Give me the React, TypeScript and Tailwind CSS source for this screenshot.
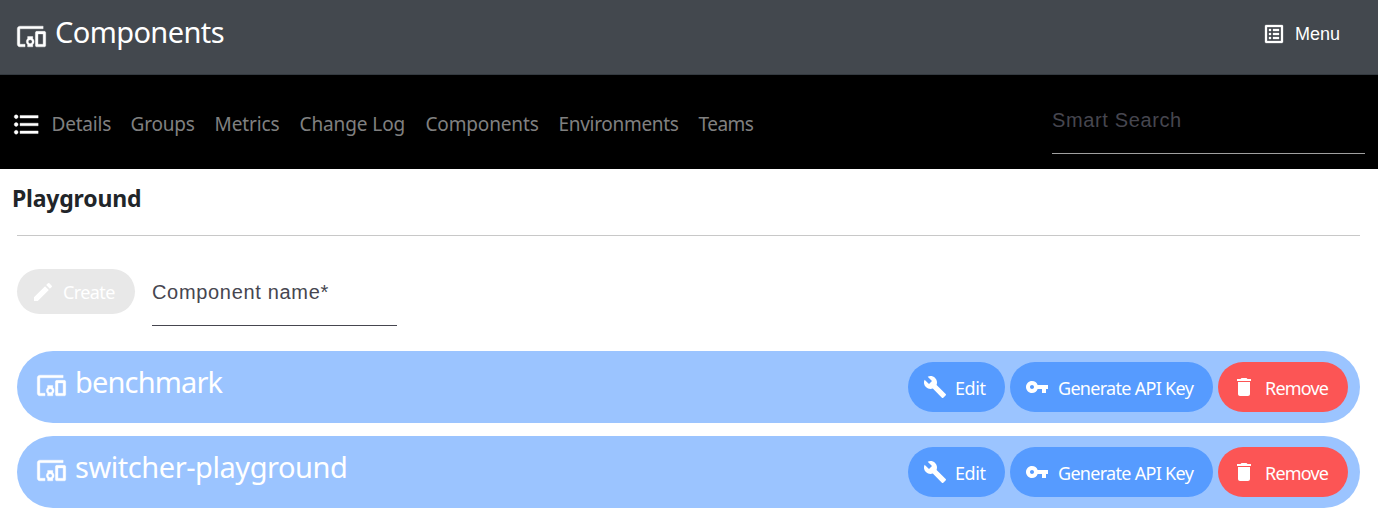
import React from "react";
import {
  MdBuild,
  MdDelete,
  MdDevicesOther,
  MdEdit,
  MdFormatListBulleted,
  MdListAlt,
  MdVpnKey,
} from "react-icons/md";

const navItems = [
  { label: "Details", width: "w-[79px]", tracking: "tracking-[-0.2px]" },
  { label: "Groups", width: "w-[84px]", tracking: "tracking-[-0.2px]" },
  { label: "Metrics", width: "w-[85px]", tracking: "tracking-[-0.1px]" },
  { label: "Change Log", width: "w-[126px]", tracking: "tracking-[-0.1px]" },
  { label: "Components", width: "w-[133px]", tracking: "tracking-[-0.15px]" },
  { label: "Environments", width: "w-[140px]", tracking: "tracking-[-0.3px]" },
  { label: "Teams", width: "w-[60px]", tracking: "tracking-[-0.5px]" },
];

function ComponentRow({ name, tracking }: { name: string; tracking: string }) {
  return (
    <li className="flex h-[72px] items-start rounded-full bg-[#9bc4ff] pl-[19px] pr-3 pt-[11px] text-white">
      <MdDevicesOther className="mt-[7.5px] size-[31px] shrink-0 stroke-[0.3] [&_path[fill=none]]:stroke-none" />
      <h3 className={`-mt-px ml-2 flex-1 text-[29px] leading-[42px] ${tracking}`}>{name}</h3>
      <div className="flex gap-[5px] text-[18px]">
        <button className="flex h-[50px] w-[97px] items-center whitespace-nowrap rounded-[25px] bg-[#569bff] pl-[15px]">
          <MdBuild className="size-6 shrink-0" />
          <span className="ml-2 mt-[3px] tracking-[-0.4px]">Edit</span>
        </button>
        <button className="flex h-[50px] w-[203px] items-center whitespace-nowrap rounded-[25px] bg-[#569bff] pl-[15px]">
          <MdVpnKey className="size-6 shrink-0" />
          <span className="ml-[9px] mt-[3px] tracking-[-0.7px]">Generate API Key</span>
        </button>
        <button className="flex h-[50px] w-[130px] items-center whitespace-nowrap rounded-[25px] bg-[#fc5555] pl-[14px]">
          <MdDelete className="size-6 shrink-0" />
          <span className="ml-[9px] mt-[3px] tracking-[-0.8px]">Remove</span>
        </button>
      </div>
    </li>
  );
}

export default function App() {
  return (
    <div className="h-[529px] overflow-hidden bg-white font-['Noto_Sans',sans-serif] text-[#212529]">
      <header className="flex h-[75px] items-start justify-between border-b border-[#343a40] bg-[#43484e] pl-4 pr-[38px] text-white">
        <div className="flex">
          <MdDevicesOther className="mt-[20.5px] size-[31px] stroke-[0.3] [&_path[fill=none]]:stroke-none" />
          <h1 className="ml-2 mt-[11px] text-[29px] leading-[42px] tracking-[-0.6px]">Components</h1>
        </div>
        <button className="mt-[21px] flex items-center font-['Liberation_Sans',sans-serif] text-[18px] leading-6">
          <MdListAlt className="size-6 stroke-[0.3] [&_path[fill=none]]:stroke-none" />
          <span className="ml-[9px] mt-px h-6">Menu</span>
        </button>
      </header>

      <nav className="flex h-[94px] bg-black pl-[11px] pr-[13px]">
        <MdFormatListBulleted className="mt-[34px] size-[31px] shrink-0 stroke-[0.3] text-white [&_path[fill=none]]:stroke-none" />
        <ul className="ml-[9.5px] mt-[35px] flex flex-1 whitespace-nowrap text-[19px] leading-7 text-[#808080]">
          {navItems.map((item) => (
            <li key={item.label} className={`${item.width} ${item.tracking}`}>{item.label}</li>
          ))}
        </ul>
        <div className="mt-[30px] h-[49px] w-[313px] border-b border-[#a0a0a0] font-['Liberation_Sans',sans-serif] text-[20px] leading-[30px] tracking-[0.63px] text-[#46464f]">
          Smart Search
        </div>
      </nav>

      <main>
        <h2 className="pl-3 pt-[13px] text-[23px] font-bold leading-8 tracking-[-0.2px]">Playground</h2>
        <section className="ml-[17px] mr-[18px] mt-[21px] border-t border-[#c8c8c8]">
          <div className="mt-[33px] flex">
            <button className="flex h-[45px] w-[118px] items-center rounded-full bg-[#e8e8e8] pl-[14px] text-[18px] text-white">
              <MdEdit className="size-6" />
              <span className="ml-2 mt-0.5 tracking-[-0.6px]">Create</span>
            </button>
            <div className="ml-[17px] mt-2 h-[49px] w-[245px] border-b border-[#46464f] font-['Liberation_Sans',sans-serif] text-[20px] leading-[30px] tracking-[0.68px] text-[#46464f]">
              Component name*
            </div>
          </div>
          <ul className="mt-[25px] flex flex-col gap-[13px]">
            <ComponentRow name="benchmark" tracking="tracking-[-0.85px]" />
            <ComponentRow name="switcher-playground" tracking="tracking-[-0.45px]" />
          </ul>
        </section>
      </main>
    </div>
  );
}
